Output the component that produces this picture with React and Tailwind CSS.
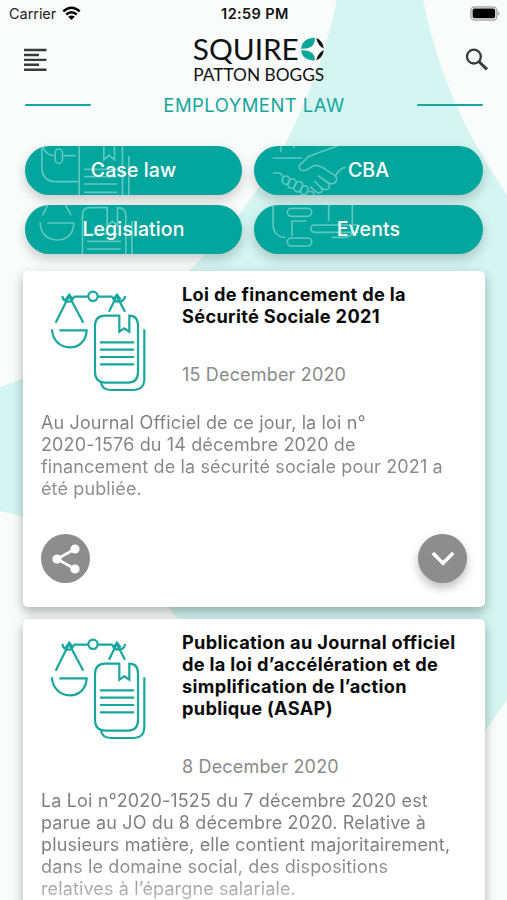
// src/App.jsx
const ARTICLES = [
  {
    id: 1,
    title: ["Loi de financement de la", "Sécurité Sociale 2021"],
    date: "15 December 2020",
    body: [
      "Au Journal Officiel de ce jour, la loi n°",
      "2020-1576 du 14 décembre 2020 de",
      "financement de la sécurité sociale pour 2021 a",
      "été publiée.",
    ],
  },
  {
    id: 2,
    title: [
      "Publication au Journal officiel",
      "de la loi d’accélération et de",
      "simplification de l’action",
      "publique (ASAP)",
    ],
    date: "8 December 2020",
    body: [
      "La Loi n°2020-1525 du 7 décembre 2020 est",
      "parue au JO du 8 décembre 2020. Relative à",
      "plusieurs matière, elle contient majoritairement,",
      "dans le domaine social, des dispositions",
      "relatives à l’épargne salariale.",
    ],
  },
];

const Backdrop = () => (
  <svg className="absolute inset-0" width="507" height="900" viewBox="0 0 507 900" fill="#d4f5f2">
    <path d="M337 0 Q323 66 292 130 Q262 195 195 265 Q110 350 0 387 V511 Q90 530 168 607 Q250 700 330 900 H400 Q440 790 507 700 V195 Q487 165 468 130 Q436 66 423 0 Z" />
  </svg>
);

const StatusBar = () => (
  <div className="flex h-7 items-center justify-between pl-[9px] pr-[6px]">
    <div className="flex w-40 items-center gap-[6px]">
      <span className="text-[14.5px] tracking-[-0.05px] text-[#222]">Carrier</span>
      <svg width="19" height="15" viewBox="0 0 19 15" className="-mt-[2px]" fill="none" stroke="#000" strokeWidth="2.4">
        <path d="M1.3 5.4 Q9.5 -1.9 17.7 5.4" />
        <path d="M4.2 8.5 Q9.5 3.9 14.8 8.5" />
        <path d="M9.5 14 L6.2 10.8 Q9.5 8.2 12.8 10.8 Z" fill="#000" stroke="none" />
      </svg>
    </div>
    <span className="text-[14.5px] font-semibold tracking-[0.4px] text-[#111]">12:59 PM</span>
    <div className="-mt-[2px] flex w-40 justify-end">
      <svg width="31" height="15" viewBox="0 0 31 15">
        <rect x="0.9" y="0.9" width="26" height="13" rx="3.6" fill="#fff" stroke="#aaa" strokeWidth="1.5" />
        <rect x="2.6" y="2.6" width="22.6" height="9.6" rx="1.8" fill="#000" />
        <path d="M28.4 5 Q30.6 7.4 28.4 9.9 Z" fill="#999" />
      </svg>
    </div>
  </div>
);

const Logo = () => (
  <svg width="136" height="52" viewBox="0 0 136 52" className="overflow-visible font-['Lato']" fill="#111">
    <text x="0.8" y="24" fontSize="29" textLength="106" lengthAdjust="spacingAndGlyphs">SQUIRE</text>
    <text x="1.2" y="45" fontSize="16.6" textLength="131" lengthAdjust="spacingAndGlyphs">PATTON BOGGS</text>
    <g fill="#0aa79d">
      <path d="M109.2 12.8 C109.8 5.8 114.3 2 122.8 1.8 C123.4 9 119 13.4 109.2 12.8 Z" />
      <path d="M109.2 14.2 C109.8 21 114.3 24.3 122.8 24.4 C123.4 18.4 119 13.8 109.2 14.2 Z" />
    </g>
    <path d="M124.2 2 Q130.6 4.4 131.8 12.6 Q126 9.8 124.2 2 Z" />
    <path d="M124.2 24.2 Q130.6 22.2 131.8 14 Q126 17 124.2 24.2 Z" />
  </svg>
);

const Header = () => (
  <header className="flex h-[57px] items-start justify-between pl-6 pr-[18px] pt-2">
    <svg width="24" height="26" viewBox="0 0 24 26" className="mt-[11.5px]" stroke="#3a3a3a" strokeWidth="2.4">
      <path d="M0 2H22.5M0 7H15M0 11.9H22.5M0 16.8H15M0 21.7H22.5" />
    </svg>
    <div className="ml-[6px]">
      <Logo />
    </div>
    <svg width="24" height="24" viewBox="0 0 24 24" className="mt-[11.5px]" fill="none" stroke="#3a3a3a" strokeWidth="2.3">
      <circle cx="8.9" cy="8.6" r="6.9" />
      <path d="M13.8 13.5 L22 21.3" strokeWidth="3" />
    </svg>
  </header>
);

const SectionTitle = () => (
  <div className="flex items-center justify-between pl-[25px] pr-6">
    <span className="h-[2.5px] w-[66px] rounded bg-[#15a69e]" />
    <h1 className="text-[18.5px] leading-[22px] tracking-[0.45px] text-[#15a69e]">EMPLOYMENT LAW</h1>
    <span className="h-[2.5px] w-[66px] rounded bg-[#15a69e]" />
  </div>
);

const CaseArt = () => (
  <svg className="absolute inset-0 h-full w-full" viewBox="45 33 650 147" fill="none" stroke="#5cc8c1" strokeWidth="5">
    <path d="M95 33 V100 Q98 140 138 140 H203" />
    <path d="M98 36 Q108 60 132 62 M160 62 H197" />
    <rect x="135" y="42" width="22" height="43" rx="11" />
    <path d="M207 33 V180 M337 33 V180 M356 63 V180" />
    <path d="M281 33 V74 L297 61 L313 74 V33" />
    <path d="M222 103 H320 M222 147 H320 M222 172 H320 M222 125 H320" />
  </svg>
);

const CbaArt = () => (
  <svg className="absolute inset-0 h-full w-full" viewBox="27 33 687 147" fill="none" stroke="#5cc8c1" strokeWidth="5">
    <path d="M108 33 V52 M147 33 V40 M83 69 H171" />
    <path d="M277 33 Q215 55 190 65 L163 91 Q160 108 178 107 Q190 103 207 91 Q225 90 243 104 L270 122 Q281 134 268 144 Q258 150 247 141 L218 122" />
    <path d="M302 97 Q282 100 272 122" />
    <path d="M83 114 H104 L115 124" />
    <path d="M247 141 Q260 158 246 163 Q236 166 226 156 L208 138 M228 157 Q236 171 224 174 Q214 175 196 155" />
    <rect x="112" y="123" width="22" height="25" rx="11" />
    <rect x="130" y="131" width="22" height="29" rx="11" transform="rotate(20 141 145)" />
    <rect x="149" y="139" width="22" height="32" rx="11" transform="rotate(25 160 155)" />
    <rect x="168" y="152" width="20" height="27" rx="10" transform="rotate(25 178 165)" />
    <path d="M190 170 Q205 165 208 180" />
  </svg>
);

const LegislationArt = () => (
  <svg className="absolute inset-0 h-full w-full" viewBox="45 210 650 147" fill="none" stroke="#5cc8c1" strokeWidth="5">
    <path d="M113 210 L97 241 M166 210 L183 241" />
    <path d="M111 264 H191 Q188 315 140 315 Q92 312 90 262" />
    <path d="M217 357 V237 Q219 218 238 218 H291 V272 L307 259 L322 272 V218 Q346 218 347 240 V357 M365 258 V357" />
    <path d="M231 319 H332 M231 342 H332 M231 297 H332" />
  </svg>
);

const EventsArt = () => (
  <svg className="absolute inset-0 h-full w-full" viewBox="27 210 687 147" fill="none" stroke="#5cc8c1" strokeWidth="5">
    <path d="M84 210 V270 Q88 307 122 307" />
    <rect x="127" y="220" width="73" height="24" rx="12" />
    <rect x="127" y="309" width="73" height="24" rx="12" />
    <path d="M141 303 V258 H185 M251 210 V257" />
    <path d="M340 292 H208 Q197 290 197 280 Q198 270 208 270 H340" />
    <path d="M322 210 V290 Q318 307 300 307 H260" />
  </svg>
);

const CATEGORIES = [
  { label: "Case law", Art: CaseArt },
  { label: "CBA", Art: CbaArt },
  { label: "Legislation", Art: LegislationArt },
  { label: "Events", Art: EventsArt },
];

const CategoryButton = ({ label, Art }) => (
  <button className="relative h-[49px] overflow-hidden rounded-full bg-[#03a69c] shadow-[0_5px_12px_rgba(0,0,0,0.2)]">
    <Art />
    <span className="relative text-[19.5px] font-medium tracking-[0.1px] text-white">{label}</span>
  </button>
);

const LawIcon = () => (
  <svg width="97" height="102" viewBox="60 60 291 306" fill="none" stroke="#18a79e" strokeWidth="6.6">
    <circle cx="189" cy="79" r="14" />
    <path d="M131 80 H174 M204 80 H248" />
    <path d="M97 78 Q99 95 118 95 Q127 94 132 80 M77 158 L117 78 L160 158 M107 89 L118 74 L129 89" />
    <path d="M248 80 Q251 95 266 95 Q284 94 285 78 M237 125 L260 78 L285 125 M250 89 L261 74 L272 89" />
    <path d="M88 181 H170 C168 215 146 232 119 232 C90 232 67 210 66 178" />
    <path d="M271 137 H225 Q195 138 195 168 V307 Q196 338 226 338 H295 Q324 337 324 307 V168 Q324 137 298 137 V185 L283 175 L268 185 V137" />
    <path d="M343 178 V330 Q341 359 312 360 H242 Q216 359 213 338" />
    <path d="M210 217 H312 M210 239 H312 M210 261 H312 M210 283 H312" />
  </svg>
);

const ArticleCard = ({ article }) => (
  <article className="flex min-h-[336px] flex-col rounded-[5px] bg-white px-[18px] pb-6 pt-3 shadow-[0_5px_12px_rgba(0,0,0,0.3)]">
    <div className="flex">
      <div className="w-[141px] shrink-0 pl-[9px] pt-[7px]">
        <LawIcon />
      </div>
      <div className="whitespace-nowrap">
        <h2 className="text-[18.2px] font-bold leading-[22px] tracking-[0.32px] text-[#0a0a0a]">
          {article.title.map((line) => (
            <span key={line} className="block">{line}</span>
          ))}
        </h2>
        <p className="mt-[37px] text-[18px] leading-[22px] tracking-[0.17px] text-[#8a8a8a]">{article.date}</p>
      </div>
    </div>
    <p
      className={`whitespace-nowrap bg-clip-text text-[18px] leading-[22px] tracking-[0.13px] text-transparent ${
        article.id === 1
          ? "mt-[20px] bg-linear-to-b from-[#7d7d7d] to-[#8e8e8e]"
          : "mt-[12px] bg-linear-to-b from-[#7d7d7d] from-60% to-[#b8b8b8]"
      }`}
    >
      {article.body.map((line) => (
        <span key={line} className="block">{line}</span>
      ))}
    </p>
    <div className="mt-auto flex justify-between pt-6">
      <button className="flex size-[49px] items-center justify-center rounded-full bg-[#8d8d8d]">
        <svg width="28" height="30" viewBox="0 0 28 30" fill="#fff" stroke="#fff" strokeWidth="2.6">
          <path d="M23 5 L5 15 L23 25" fill="none" />
          <circle cx="23" cy="5" r="3.3" />
          <circle cx="5" cy="15" r="3.3" />
          <circle cx="23" cy="25" r="3.3" />
        </svg>
      </button>
      <button className="flex size-[49px] items-center justify-center rounded-full bg-[#8d8d8d] shadow-[0_5px_10px_rgba(0,0,0,0.25)]">
        <svg width="24" height="16" viewBox="0 0 24 16" fill="none" stroke="#fff" strokeWidth="3.6">
          <path d="M1.8 2 L12 12.2 L22.2 2" />
        </svg>
      </button>
    </div>
  </article>
);

const App = () => {
  return (
    <div className="relative h-[900px] w-[507px] overflow-hidden bg-[#fafcfb] font-['Inter',sans-serif]">
      <Backdrop />
      <div className="relative">
        <StatusBar />
        <Header />
        <div className="mt-[9px]">
          <SectionTitle />
        </div>
        <nav className="mt-[30px] grid grid-cols-[217px_229px] gap-x-3 gap-y-[10px] pl-[25px]">
          {CATEGORIES.map((category) => (
            <CategoryButton key={category.label} {...category} />
          ))}
        </nav>
        <main className="mt-[17px] flex flex-col gap-3 pl-[23px] pr-[22px]">
          {ARTICLES.map((article) => (
            <ArticleCard key={article.id} article={article} />
          ))}
        </main>
      </div>
    </div>
  );
};

export default App;
